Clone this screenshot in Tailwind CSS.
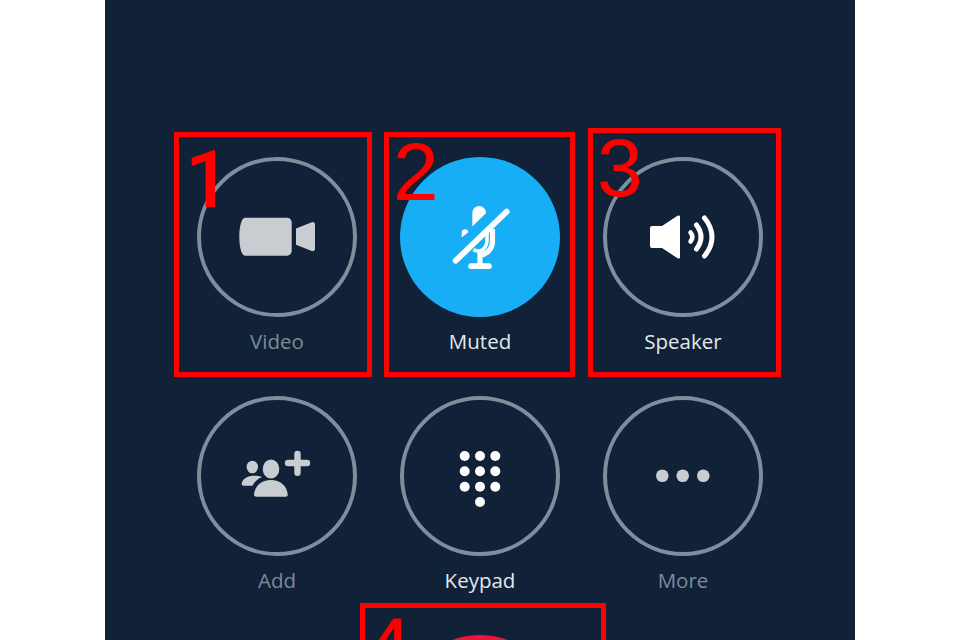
<!DOCTYPE html>
<html>
<head>
<script src="https://cdn.jsdelivr.net/npm/@tailwindcss/browser@4"></script>
</head>
<body class="bg-white">
<div class="relative w-[960px] h-[640px] overflow-hidden bg-white font-['Open_Sans',sans-serif]">
  <main class="w-[750px] h-[640px] mx-auto bg-[#102138] pt-[157px] overflow-hidden">
    <div class="grid grid-cols-[repeat(3,203px)] justify-center gap-y-[40px]">
      <div class="flex flex-col items-center">
        <div class="w-[160px] h-[160px] rounded-full border-[4px] border-[#7f8e9b] flex items-center justify-center">
          <svg class="w-[100px] h-[100px]" viewBox="0 0 100 100" fill="#c9cdd1"><path d="M18 30.700H60a4.700 4.700 0 0 1 4.700 4.700V64a4.700 4.700 0 0 1-4.700 4.700H18c-3.500 0-5.700-9-5.700-19s2.200-19 5.700-19Z"/><path d="M69 41.500 84.800 35.200a2.300 2.300 0 0 1 3.200 2.200V61.700a2.300 2.300 0 0 1-3.200 2.200L69 57.700Z"/></svg>
        </div>
        <span class="mt-[9px] text-[20.5px] leading-[30px] text-[#7f8a96]">Video</span>
      </div>
      <div class="flex flex-col items-center">
        <div class="w-[160px] h-[160px] rounded-full bg-[#18aef5] flex items-center justify-center">
          <svg class="w-[100px] h-[100px]" viewBox="0 0 100 100" fill="#fff"><path d="M42.300 39.500V26a6.900 6.900 0 0 1 13.800 0Z"/><path d="M31.700 50.500V46a3.300 3.300 0 0 1 6.600-.8Z"/><path d="M43.500 62.500C50 66.500 56.500 62 57 54V46" fill="none" stroke="#fff" stroke-width="3.600"/><path d="M62.500 42V54C62.500 62 57 67.500 50 68V77" fill="none" stroke="#fff" stroke-width="5.200"/><rect x="38.300" y="76.300" width="23.400" height="5.700" rx="2.500"/><path d="M25.700 73.700 76.700 24.700" stroke="#fff" stroke-width="5.800" stroke-linecap="round"/></svg>
        </div>
        <span class="mt-[9px] text-[20.5px] leading-[30px] text-[#e4e8ec]">Muted</span>
      </div>
      <div class="flex flex-col items-center">
        <div class="w-[160px] h-[160px] rounded-full border-[4px] border-[#7f8e9b] flex items-center justify-center">
          <svg class="w-[100px] h-[100px]" viewBox="0 0 100 100" fill="#fff"><path d="M19 39H29L44.500 28.800a1.500 1.500 0 0 1 2.500 1.300V69.900a1.500 1.500 0 0 1-2.500 1.300L29 61H19a2 2 0 0 1-2-2V41a2 2 0 0 1 2-2Z"/><g fill="none" stroke="#fff" stroke-linecap="round"><path d="M57.500 45.500c2.500 3 2.500 6 0 9" stroke-width="4.500"/><path d="M63.500 38C69.500 46 69.500 54 63.500 62" stroke-width="5"/><path d="M71.500 31C81.500 43 81.500 57 71.500 69" stroke-width="5"/></g></svg>
        </div>
        <span class="mt-[9px] text-[20.5px] leading-[30px] text-[#e4e8ec]">Speaker</span>
      </div>
      <div class="flex flex-col items-center">
        <div class="w-[160px] h-[160px] rounded-full border-[4px] border-[#7f8e9b] flex items-center justify-center">
          <svg class="w-[100px] h-[100px]" viewBox="0 0 100 100" fill="#c9cdd1"><ellipse cx="25.300" cy="41" rx="5.700" ry="6.300"/><ellipse cx="44" cy="43" rx="8.300" ry="9.500"/><path d="M14.700 58C15 53 20 50 26 49.700 29 49.600 33 50 35.300 51 31 52.500 27.500 55.500 25.500 59.700H16.500C15.500 59.700 14.700 59 14.700 58Z"/><path d="M27 68.500C28 59 35 54 44 54S60 59.500 60.700 68.500C60.800 70 60 70.700 58.500 70.700H29.500C28 70.700 27 70 27 68.500Z"/><path d="M61 37H80M70.500 28V46.700" fill="none" stroke="#c9cdd1" stroke-width="6.400" stroke-linecap="round"/></svg>
        </div>
        <span class="mt-[9px] text-[20.5px] leading-[30px] text-[#7f8a96]">Add</span>
      </div>
      <div class="flex flex-col items-center">
        <div class="w-[160px] h-[160px] rounded-full border-[4px] border-[#7f8e9b] flex items-center justify-center">
          <svg class="w-[100px] h-[100px]" viewBox="0 0 100 100" fill="#fff"><circle cx="34.700" cy="30" r="5"/><circle cx="50" cy="30" r="5"/><circle cx="65.300" cy="30" r="5"/><circle cx="34.700" cy="45.300" r="5"/><circle cx="50" cy="45.300" r="5"/><circle cx="65.300" cy="45.300" r="5"/><circle cx="34.700" cy="60.700" r="5"/><circle cx="50" cy="60.700" r="5"/><circle cx="65.300" cy="60.700" r="5"/><circle cx="50" cy="76" r="5"/></svg>
        </div>
        <span class="mt-[9px] text-[20.5px] leading-[30px] text-[#e4e8ec]">Keypad</span>
      </div>
      <div class="flex flex-col items-center">
        <div class="w-[160px] h-[160px] rounded-full border-[4px] border-[#7f8e9b] flex items-center justify-center">
          <svg class="w-[100px] h-[100px]" viewBox="0 0 100 100" fill="#c9cdd1"><circle cx="29.300" cy="49.700" r="6.300"/><circle cx="49.700" cy="49.700" r="6.300"/><circle cx="70.300" cy="49.700" r="6.300"/></svg>
        </div>
        <span class="mt-[9px] text-[20.5px] leading-[30px] text-[#7f8a96]">More</span>
      </div>
      <div class="col-start-2 flex justify-center">
        <div class="w-[160px] h-[160px] rounded-full bg-[#ee1438]"></div>
      </div>
    </div>
  </main>
  <div class="absolute left-[174px] top-[132px] w-[198px] h-[245px] border-[5px] border-[#ff0000] font-['Roboto',sans-serif] font-medium text-[#ff0000] text-[80px] leading-[86px] pl-[6px]">1</div>
  <div class="absolute left-[384px] top-[132px] w-[191px] h-[245px] border-[5px] border-[#ff0000] font-['Liberation_Sans',sans-serif] text-[#ff0000] text-[82px] leading-[70px] pl-[4px]">2</div>
  <div class="absolute left-[588px] top-[128px] w-[193px] h-[249px] border-[5px] border-[#ff0000] font-['Liberation_Sans',sans-serif] text-[#ff0000] text-[82px] leading-[70px] pl-[4px]">3</div>
  <div class="absolute left-[360px] top-[603px] w-[246px] h-[100px] border-[5px] border-[#ff0000] font-['Liberation_Sans',sans-serif] text-[#ff0000] text-[84px] leading-[78px]">4</div>
</div>
</body>
</html>
